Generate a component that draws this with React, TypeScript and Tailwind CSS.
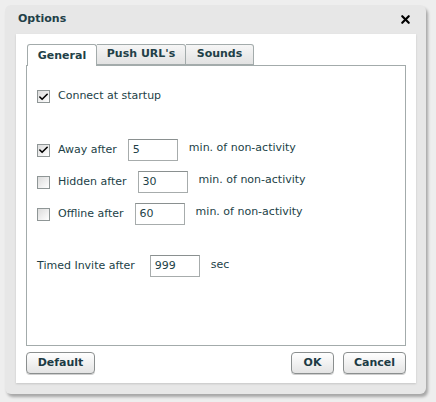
import { Check, X } from "lucide-react";

function Box({ checked }: { checked?: boolean }) {
  return (
    <span className="w-[13px] h-[13px] border border-[#8f9696] bg-gradient-to-br from-[#dcdcdc] to-white flex items-center justify-center shrink-0">
      {checked && <Check size={12} strokeWidth={3.5} className="text-black" />}
    </span>
  );
}

function Field({ value }: { value: string }) {
  return (
    <div className="w-[50px] h-[22px] border border-[#a7acac] border-t-[#8a9090] bg-white flex items-center pl-[4px] text-[11px]">
      {value}
    </div>
  );
}

function Btn({ label, w }: { label: string; w: string }) {
  return (
    <button className={`${w} h-[22px] rounded-[4px] border border-[#8b8f8f] bg-gradient-to-b from-white to-[#e4e4e4] text-[11px] font-bold text-[#1c3a44] shadow-[0_1px_0_#cfcfcf]`}>
      {label}
    </button>
  );
}

const rows = [
  { label: "Away after", value: "5", checked: true },
  { label: "Hidden after", value: "30", checked: false },
  { label: "Offline after", value: "60", checked: false },
];

export default function App() {
  return (
    <div className="w-[436px] h-[402px] bg-[#eeeeee] pt-[5px] pl-[5px] text-[#223f47]" style={{ fontFamily: "'DejaVu Sans', Verdana, sans-serif" }}>
      {/* Dialog */}
      <div className="w-[421px] h-[389px] rounded-[6px] bg-[#e7e7e7] shadow-[2px_3px_3px_rgba(0,0,0,0.3)] flex flex-col">
        <div className="h-[29px] flex items-center justify-between pl-[13px] pr-[14px]">
          <span className="text-[11px] font-bold">Options</span>
          <X size={13} strokeWidth={4} className="text-black" />
        </div>

        <div className="ml-[11px] w-[400px] h-[349px] bg-white pl-[10px] pt-[10px] shadow-[0_1px_2px_rgba(0,0,0,0.15)]">
          {/* Tabs */}
          <div className="flex h-[21px] pl-[1px] text-[11px] font-bold">
            <div className="w-[70px] h-[22px] border border-b-0 border-[#a3abab] rounded-t-[3px] bg-white flex items-center justify-center pt-[2px] relative z-10">
              General
            </div>
            <div className="w-[89px] border border-l-0 border-[#a3abab] rounded-tr-[3px] bg-gradient-to-b from-[#f6f6f6] to-[#e2e2e2] flex items-center justify-center">
              Push URL's
            </div>
            <div className="w-[68px] border border-l-0 border-[#a3abab] rounded-tr-[3px] bg-gradient-to-b from-[#f6f6f6] to-[#e2e2e2] flex items-center justify-center">
              Sounds
            </div>
          </div>

          {/* Tab content */}
          <div className="w-[380px] h-[281px] border border-[#a3abab] text-[11px] pl-[10px]">
            <div className="flex items-center gap-[8px] mt-[24px] h-[13px]">
              <Box checked />
              <span>Connect at startup</span>
            </div>

            <div className="mt-[36px] flex flex-col gap-[10px]">
              {rows.map((r) => (
                <div key={r.label} className="flex items-center h-[22px]">
                  <Box checked={r.checked} />
                  <span className="ml-[8px]">{r.label}</span>
                  <span className="ml-[11px]">
                    <Field value={r.value} />
                  </span>
                  <span className="ml-[11px] -mt-[4px]">min. of non-activity</span>
                </div>
              ))}
            </div>

            <div className="mt-[30px] flex items-center h-[22px]">
              <span>Timed Invite after</span>
              <span className="ml-[15px]">
                <Field value="999" />
              </span>
              <span className="ml-[11px] -mt-[2px]">sec</span>
            </div>
          </div>

          {/* Buttons */}
          <div className="w-[380px] flex mt-[6px] gap-[9px]">
            <Btn label="Default" w="w-[69px]" />
            <div className="flex-1" />
            <Btn label="OK" w="w-[43px]" />
            <Btn label="Cancel" w="w-[63px]" />
          </div>
        </div>
      </div>
    </div>
  );
}
